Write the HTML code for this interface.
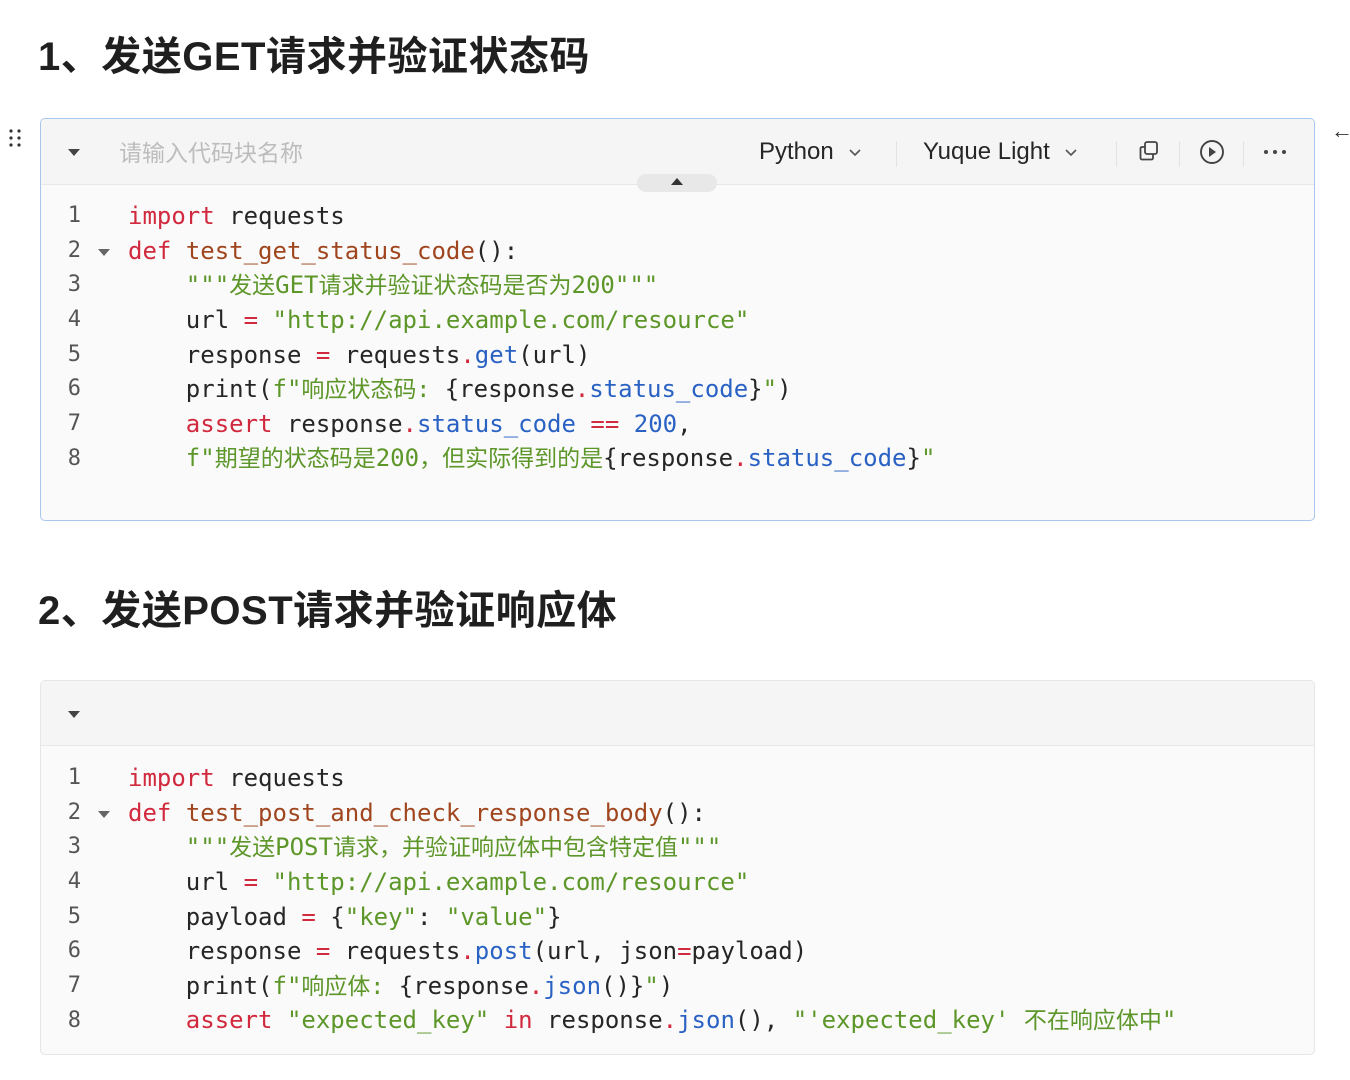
<!DOCTYPE html>
<html><head><meta charset="utf-8"><style>
*{margin:0;padding:0;box-sizing:border-box}
body{width:1350px;height:1080px;background:#fff;position:relative;overflow:hidden;font-family:"Liberation Sans","Noto Sans CJK SC",sans-serif;color:#262626}
h1{position:absolute;left:38px;font-size:40px;font-weight:bold;color:#1f1f1f;letter-spacing:0.5px;line-height:50px}
.blk{position:absolute;left:40px;width:1275px;border:1px solid #e6e6e6;border-radius:5px;background:#fafafa;overflow:hidden}
.hd{height:66px;background:#f5f5f5;border-bottom:1px solid #e8e8e8;position:relative}
.tri{position:absolute;left:27px;top:30px;width:0;height:0;border-left:6px solid transparent;border-right:6px solid transparent;border-top:7px solid #444}
.code{position:absolute;left:0;font-family:"DejaVu Sans Mono","Liberation Mono","Noto Sans CJK SC",monospace;font-size:24px;white-space:pre;color:#262626}
.code div{height:34.65px;line-height:34.65px;overflow:visible}
.ln{position:absolute;left:26px;width:14px;text-align:right;font-family:"DejaVu Sans Mono",monospace;font-size:22px;line-height:34.65px;color:#555;white-space:pre}
.k{color:#d1293d}.f{color:#a0461f}.s{color:#5d9629}.p{color:#2a62c4}.o{color:#d1293d}
.c{font-size:23px;line-height:1}
.ft{position:absolute;left:57px;width:0;height:0;border-left:6px solid transparent;border-right:6px solid transparent;border-top:7px solid #666}
.tb{position:absolute;top:0;height:66px;display:flex;align-items:center;font-size:24px;color:#262626}
.sep{position:absolute;top:22px;width:1px;height:26px;background:#e3e3e3}
</style></head><body>
<h1 style="top:32px">1、发送GET请求并验证状态码</h1>
<div style="position:absolute;left:9px;top:129px;width:12px;height:18px;">
<svg width="12" height="18"><g fill="#333"><circle cx="2" cy="2" r="1.6"/><circle cx="10" cy="2" r="1.6"/><circle cx="2" cy="9" r="1.6"/><circle cx="10" cy="9" r="1.6"/><circle cx="2" cy="16" r="1.6"/><circle cx="10" cy="16" r="1.6"/></g></svg></div>
<div style="position:absolute;left:1331px;top:118px;font-size:22px;color:#333">←</div>
<div class="blk" style="top:118px;height:403px;border-color:#a9c6ef">
 <div class="hd">
  <div class="tri"></div>
  <div style="position:absolute;left:78px;top:15px;font-size:23px;color:#bdbdbd">请输入代码块名称</div>
  <div class="tb" style="left:718px">Python <svg style="margin-left:14px" width="14" height="10"><path d="M2 3l5 5 5-5" fill="none" stroke="#555" stroke-width="1.6"/></svg></div>
  <div class="sep" style="left:855px"></div>
  <div class="tb" style="left:882px">Yuque Light <svg style="margin-left:14px" width="14" height="10"><path d="M2 3l5 5 5-5" fill="none" stroke="#555" stroke-width="1.6"/></svg></div>
  <div class="sep" style="left:1075px"></div>
  <svg style="position:absolute;left:1096px;top:20px" width="24" height="24"><rect x="8" y="3" width="12" height="12" rx="2" fill="none" stroke="#444" stroke-width="1.8"/><path d="M8 8H5a1.5 1.5 0 0 0-1.5 1.5V19a1.5 1.5 0 0 0 1.5 1.5h9.5A1.5 1.5 0 0 0 16 19v-4" fill="none" stroke="#444" stroke-width="1.8"/></svg>
  <div class="sep" style="left:1138px"></div>
  <svg style="position:absolute;left:1158px;top:20px" width="26" height="26"><circle cx="13" cy="13" r="11" fill="none" stroke="#444" stroke-width="1.9"/><path d="M10 8l7 5-7 5z" fill="#444"/></svg>
  <div class="sep" style="left:1202px"></div>
  <svg style="position:absolute;left:1222px;top:30px" width="24" height="6"><g fill="#444"><circle cx="3" cy="3" r="2"/><circle cx="12" cy="3" r="2"/><circle cx="21" cy="3" r="2"/></g></svg>
  <div style="position:absolute;left:596px;top:55px;width:80px;height:18px;background:#e8e8e8;border-radius:9px"></div>
  <div style="position:absolute;left:630px;top:59px;width:0;height:0;border-left:6px solid transparent;border-right:6px solid transparent;border-bottom:7px solid #333"></div>
 </div>
 <div class="ln" style="top:80px">1
2
3
4
5
6
7
8</div>
 <div class="ft" style="top:130px"></div>
 <div class="code" style="left:87px;top:80px"><div><span class="k">import</span> requests</div><div><span class="k">def</span> <span class="f">test_get_status_code</span>():</div><div>    <span class="s">"""<span class="c">发送</span>GET<span class="c">请求并验证状态码是否为</span>200"""</span></div><div>    url <span class="o">=</span> <span class="s">"http://api.example.com/resource"</span></div><div>    response <span class="o">=</span> requests<span class="o">.</span><span class="p">get</span>(url)</div><div>    print(<span class="s">f"<span class="c">响应状态码:</span> </span>{response<span class="o">.</span><span class="p">status_code</span>}<span class="s">"</span>)</div><div>    <span class="k">assert</span> response<span class="o">.</span><span class="p">status_code</span> <span class="o">==</span> <span class="p">200</span>,</div><div>    <span class="s">f"<span class="c">期望的状态码是</span>200<span class="c">，但实际得到的是</span></span>{response<span class="o">.</span><span class="p">status_code</span>}<span class="s">"</span></div></div>
</div>

<h1 style="top:586px">2、发送POST请求并验证响应体</h1>
<div class="blk" style="top:680px;height:375px">
 <div class="hd" style="height:65px"><div class="tri"></div></div>
 <div class="ln" style="top:80px">1
2
3
4
5
6
7
8</div>
 <div class="ft" style="top:130px"></div>
 <div class="code" style="left:87px;top:80px"><div><span class="k">import</span> requests</div><div><span class="k">def</span> <span class="f">test_post_and_check_response_body</span>():</div><div>    <span class="s">"""<span class="c">发送</span>POST<span class="c">请求，并验证响应体中包含特定值</span>"""</span></div><div>    url <span class="o">=</span> <span class="s">"http://api.example.com/resource"</span></div><div>    payload <span class="o">=</span> {<span class="s">"key"</span>: <span class="s">"value"</span>}</div><div>    response <span class="o">=</span> requests<span class="o">.</span><span class="p">post</span>(url, json<span class="o">=</span>payload)</div><div>    print(<span class="s">f"<span class="c">响应体:</span> </span>{response<span class="o">.</span><span class="p">json</span>()}<span class="s">"</span>)</div><div>    <span class="k">assert</span> <span class="s">"expected_key"</span> <span class="k">in</span> response<span class="o">.</span><span class="p">json</span>(), <span class="s">"'expected_key' <span class="c">不在响应体中</span>"</span></div></div>
</div>
</body></html>
